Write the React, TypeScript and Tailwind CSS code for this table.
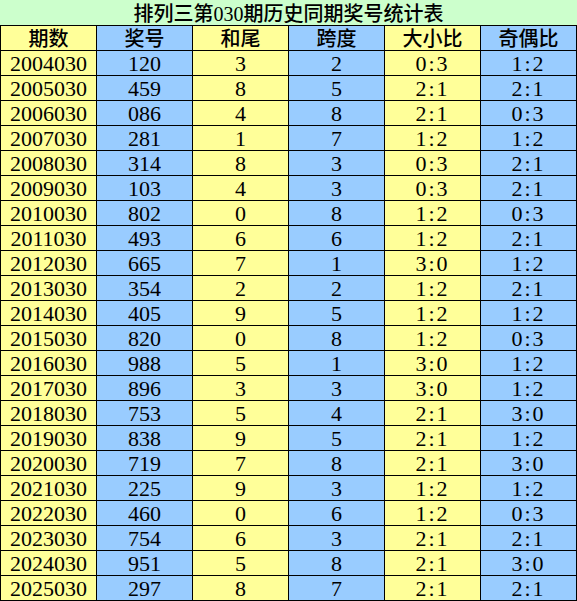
const rows: [string, string, string, string, string, string][] = [
  ['2004030', '120', '3', '2', '0:3', '1:2'],
  ['2005030', '459', '8', '5', '2:1', '2:1'],
  ['2006030', '086', '4', '8', '2:1', '0:3'],
  ['2007030', '281', '1', '7', '1:2', '1:2'],
  ['2008030', '314', '8', '3', '0:3', '2:1'],
  ['2009030', '103', '4', '3', '0:3', '2:1'],
  ['2010030', '802', '0', '8', '1:2', '0:3'],
  ['2011030', '493', '6', '6', '1:2', '2:1'],
  ['2012030', '665', '7', '1', '3:0', '1:2'],
  ['2013030', '354', '2', '2', '1:2', '2:1'],
  ['2014030', '405', '9', '5', '1:2', '1:2'],
  ['2015030', '820', '0', '8', '1:2', '0:3'],
  ['2016030', '988', '5', '1', '3:0', '1:2'],
  ['2017030', '896', '3', '3', '3:0', '1:2'],
  ['2018030', '753', '5', '4', '2:1', '3:0'],
  ['2019030', '838', '9', '5', '2:1', '1:2'],
  ['2020030', '719', '7', '8', '2:1', '3:0'],
  ['2021030', '225', '9', '3', '1:2', '1:2'],
  ['2022030', '460', '0', '6', '1:2', '0:3'],
  ['2023030', '754', '6', '3', '2:1', '2:1'],
  ['2024030', '951', '5', '8', '2:1', '3:0'],
  ['2025030', '297', '8', '7', '2:1', '2:1'],
];

const headers = ['期数', '奖号', '和尾', '跨度', '大小比', '奇偶比'];

const colBg = ['bg-[#ffff99]', 'bg-[#99ccff]', 'bg-[#ffff99]', 'bg-[#99ccff]', 'bg-[#ffff99]', 'bg-[#99ccff]'];

const font = { fontFamily: '"Liberation Serif", "Noto Sans CJK SC", serif' };

export default function App() {
  return (
    <div className="w-[577px] h-[601px] bg-white text-black" style={font}>
      <div className="h-[25px] bg-[#ccffcc] flex items-center justify-center pt-[2px] text-[20px] leading-none font-medium">
        排列三第030期历史同期奖号统计表
      </div>
      <div className="grid grid-cols-[repeat(6,95px)] auto-rows-[24px] gap-px bg-black p-px">
        {headers.map((h, i) => (
          <div key={h} className={`${colBg[i]} flex items-center justify-center pt-[1px] text-[20px] leading-none font-medium`}>
            {h}
          </div>
        ))}
        {rows.map((r) =>
          r.map((v, i) => (
            <div
              key={r[0] + i}
              className={`${colBg[i]} flex items-center justify-center text-[22px] leading-none pt-[2px] ${v.includes(':') ? 'tracking-[2px]' : ''}`}
            >
              {v}
            </div>
          )),
        )}
      </div>
    </div>
  );
}
